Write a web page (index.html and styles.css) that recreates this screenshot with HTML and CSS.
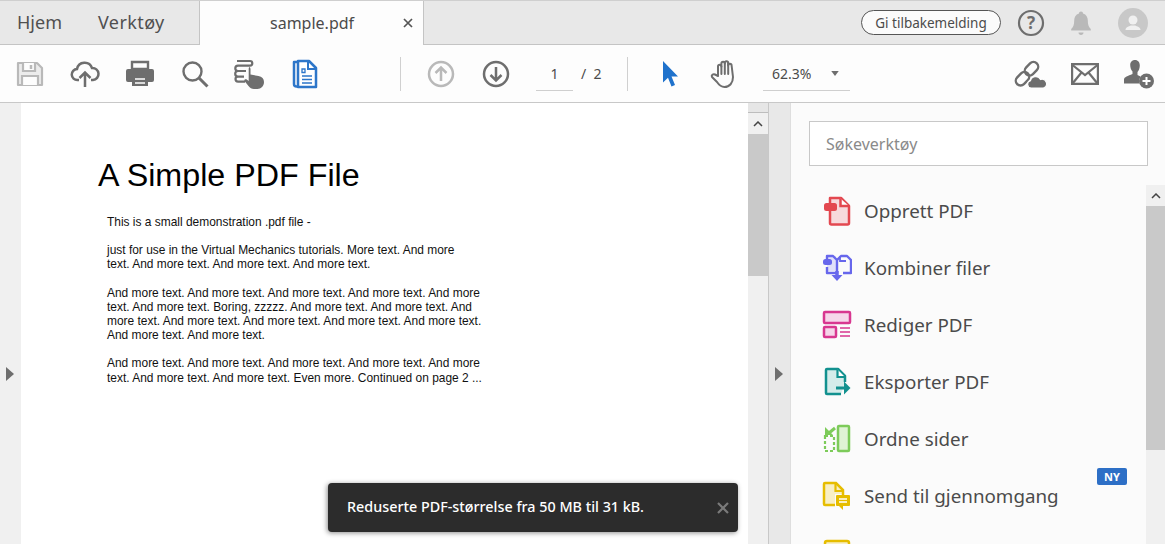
FILE: index.html
```html
<!DOCTYPE html>
<html lang="en">
<head>
    <meta charset="UTF-8">
    <title>sample.pdf</title>
    <link rel="stylesheet" href="styles.css">
</head>
<body>
    <div class="tabbar">
        <a class="nav-tab nav-home">Hjem</a>
        <a class="nav-tab nav-tools">Verktøy</a>
        <div class="doc-tab">
            <span class="doc-name">sample.pdf</span>
            <svg class="doc-close" width="10" height="10" viewBox="0 0 10 10"><path d="M1 1l8 8M9 1l-8 8" stroke="#555" stroke-width="1.7"/></svg>
        </div>
        <div class="tabbar-right">
            <button class="feedback">Gi tilbakemelding</button>
            <svg class="top-icon" width="28" height="28" viewBox="0 0 28 28"><circle cx="14" cy="14" r="12" fill="none" stroke="#6e6e6e" stroke-width="2.2"/><text x="14" y="20" text-anchor="middle" class="help-mark">?</text></svg>
            <svg class="top-icon" width="28" height="28" viewBox="0 0 28 28"><path d="M14 2.500c1.300 0 2 .8 2 1.900 3.400 1 4.800 3.800 4.800 7.100 0 4.500 1 6.800 3 8.500v1.500H4.200V20c2-1.700 3-4 3-8.500 0-3.300 1.400-6.100 4.800-7.100 0-1.100.7-1.900 2-1.900z" fill="#b9b9b9"/><path d="M11.500 23.500h5c0 1.500-1 2.500-2.500 2.500s-2.500-1-2.500-2.500z" fill="#b9b9b9"/></svg>
            <svg class="top-icon" width="30" height="30" viewBox="0 0 30 30"><circle cx="15" cy="15" r="15" fill="#c8c8c8"/><circle cx="15" cy="12" r="4.500" fill="#f0f0f0"/><path d="M7.500 22c0-3 3.500-3.500 5.500-4.500h4c2 1 5.500 1.500 5.500 4.500z" fill="#f0f0f0"/></svg>
        </div>
    </div>

    <div class="toolbar">
        <div class="tool-group">
            <span class="tool">
                <svg width="28" height="28" viewBox="0 0 28 28" fill="#ececec" stroke="#b9b9b9" stroke-width="2.200"><path d="M2 3h19l5 5v17H2z" stroke-linejoin="round"/><path d="M7 3v8h12V3" fill="#fdfdfd"/><path d="M6 25v-9h16v9" fill="#fdfdfd"/><path d="M15 5v4" stroke-width="2.500"/></svg>
            </span>
            <span class="tool">
                <svg width="30" height="30" viewBox="0 0 30 30" fill="none" stroke="#6e6e6e" stroke-width="2.500"><path d="M9 21H7.500a5.500 5.500 0 0 1-.5-11 7.800 7.800 0 0 1 15-1 6 6 0 0 1 1 12H21"/><path d="M15 28V14M9.500 19l5.500-5.500 5.500 5.500"/></svg>
            </span>
            <span class="tool tool-print">
                <svg width="30" height="28" viewBox="0 0 30 28"><path d="M7 2h16v7H7z" fill="none" stroke="#6e6e6e" stroke-width="2.400"/><path d="M3 9h24a2 2 0 0 1 2 2v9a2 2 0 0 1-2 2h-4v-6H7v6H3a2 2 0 0 1-2-2v-9a2 2 0 0 1 2-2z" fill="#6e6e6e"/><path d="M7 15h16v11H7z" fill="#6e6e6e"/><path d="M10 19h10M10 23h10" stroke="#fff" stroke-width="1.600"/></svg>
            </span>
            <span class="tool">
                <svg width="28" height="28" viewBox="0 0 28 28" fill="none" stroke="#6e6e6e"><circle cx="11.500" cy="11.500" r="9" stroke-width="2.400"/><path d="M18 18l8.500 8.500" stroke-width="3"/></svg>
            </span>
            <span class="tool">
                <svg width="32" height="30" viewBox="0 0 32 30"><path d="M3 2h13a2.300 2.300 0 0 1 0 4.600H4a2.700 2.700 0 0 0 0 5.400h8M4 12a2.800 2.800 0 0 0 0 5.600h6M4 17.600a2.500 2.500 0 0 0 0 5h7" fill="none" stroke="#6e6e6e" stroke-width="2.200"/><path d="M14.500 8c1.200 0 2 .8 2 2v5.500l8 1.500c3.500.8 5.500 2.500 5.500 6 0 4-3 7-6.500 7h-3.500c-2.500 0-4-1-5.500-3l-4-5c-.8-1.200 1-2.500 2.200-1.500l2 1.500V10c0-1.200.6-2 1.800-2z" fill="#6e6e6e"/></svg>
            </span>
            <span class="tool">
                <svg width="28" height="30" viewBox="0 0 28 30" fill="none" stroke="#2d76c9" stroke-width="2.500"><path d="M7 3H3v22c0 1.500 1 2.500 2.500 2.500H8" stroke-linejoin="round"/><path d="M7 2h11l7 7v19H7z" fill="#fff" stroke-linejoin="round"/><path d="M17 2v8h8" stroke-width="2"/><path d="M11 17h10M11 20.500h10M11 24h10" stroke-width="1.600"/><path d="M11 10h3v3.500h-3z" stroke-width="1.300"/></svg>
            </span>
        </div>
        <span class="tool-sep"></span>
        <div class="page-nav">
            <span class="tool">
                <svg width="28" height="28" viewBox="0 0 28 28" fill="none" stroke="#b9b9b9" stroke-width="2.500"><circle cx="14" cy="14" r="12"/><path d="M14 21V7.500M8.500 13L14 7.500l5.500 5.500"/></svg>
            </span>
            <span class="tool">
                <svg width="28" height="28" viewBox="0 0 28 28" fill="none" stroke="#6e6e6e" stroke-width="2.500"><circle cx="14" cy="14" r="12"/><path d="M14 7v13.500M8.500 15l5.500 5.500 5.500-5.500"/></svg>
            </span>
            <span class="page-box">1</span>
            <span class="page-total">/&nbsp;&nbsp;2</span>
        </div>
        <span class="tool-sep"></span>
        <span class="tool tool-select">
            <svg width="20" height="28" viewBox="0 0 20 28"><path d="M3 1l15 15.500h-6.500l3.500 8.500-3.500 1.500-3.500-8.800-5 4.800z" fill="#1f72cc"/></svg>
        </span>
        <span class="tool tool-hand">
            <svg width="30" height="30" viewBox="0 0 30 30" fill="none" stroke="#6e6e6e" stroke-width="2" stroke-linecap="round" stroke-linejoin="round"><path d="M9 17V7.500a1.700 1.700 0 0 1 3.400 0V4.500a1.700 1.700 0 0 1 3.400 0V4a1.700 1.700 0 0 1 3.400 0v2.500a1.700 1.700 0 0 1 3.400 0L24 18c0 6-3.500 10-8.500 10-4 0-5.500-2-7.500-5l-5-5c-1-1.500 1-3.500 3-2.500z"/><path d="M12.400 7.500V15M15.800 4.500V15M19.200 4v11"/></svg>
        </span>
        <div class="zoom-box">
            <span>62.3%</span>
            <svg width="8" height="5" viewBox="0 0 9 6"><path d="M0 0h9L4.500 6z" fill="#6e6e6e"/></svg>
        </div>
        <div class="toolbar-right">
            <svg width="34" height="30" viewBox="0 0 34 30" fill="none" stroke="#6e6e6e" stroke-width="2.400"><rect x="2" y="15" width="15" height="9.500" rx="4.750" transform="rotate(-45 9.500 19.750)"/><rect x="11" y="5" width="15" height="9.500" rx="4.750" transform="rotate(-45 18.500 9.750)"/><path d="M18 29a3.700 3.700 0 0 1-.5-7.300 5.500 5.500 0 0 1 10-1.300 4.400 4.400 0 0 1 3 8.600z" fill="#6e6e6e" stroke="#fdfdfd" stroke-width="1.200"/></svg>
            <svg width="28" height="22" viewBox="0 0 28 22" fill="none" stroke="#6e6e6e" stroke-width="2.200"><path d="M1.100 1.100h25.800v19.800H1.100z"/><path d="M1.500 2L14 12 26.500 2M1.500 20.500L10.500 9.500M26.500 20.500L17.500 9.500"/></svg>
            <svg width="32" height="30" viewBox="0 0 32 30"><path d="M12 1c3 0 4.800 2.300 4.800 5.500 0 2.500-.9 5-2.300 6.500v3l3 1.500a8 8 0 0 0-1 7H1v-4c0-2.500 4-3.500 8.500-5.500v-2.500c-1.400-1.500-2.300-4-2.300-6.500C7.200 3.300 9 1 12 1z" fill="#6e6e6e"/><circle cx="23.500" cy="22" r="7.500" fill="#6e6e6e"/><path d="M19.500 22h8M23.500 18v8" stroke="#fff" stroke-width="2"/></svg>
        </div>
    </div>

    <div class="workspace">
        <div class="gutter">
            <span class="arrow-right"></span>
        </div>
        <div class="page">
            <h1 class="page-title">A Simple PDF File</h1>
            <div class="page-text">
                <p>This is a small demonstration .pdf file -</p>
                <p class="para-wide">just for use in the Virtual Mechanics tutorials. More text. And more<br>text. And more text. And more text. And more text.</p>
                <p>And more text. And more text. And more text. And more text. And more<br>text. And more text. Boring, zzzzz. And more text. And more text. And<br>more text. And more text. And more text. And more text. And more text.<br>And more text. And more text.</p>
                <p class="para-last">And more text. And more text. And more text. And more text. And more<br>text. And more text. And more text. Even more. Continued on page 2 ...</p>
            </div>
        </div>
        <div class="scrollbar page-scroll">
            <div class="scroll-cap"></div>
            <div class="scroll-btn"><svg width="10" height="6" viewBox="0 0 10 6"><path d="M1 5l4-4 4 4" fill="none" stroke="#444" stroke-width="1.500"/></svg></div>
            <div class="scroll-thumb page-thumb"></div>
        </div>
        <div class="panel-strip">
            <span class="arrow-right"></span>
        </div>
        <div class="panel">
            <div class="search-wrap">
                <div class="search-box">Søkeverktøy</div>
            </div>
            <div class="panel-body">
                <ul class="tool-list">
                    <li class="tool-row">
                        <svg width="30" height="30" viewBox="0 0 30 30"><path d="M8 2h11l8 8v17a1.500 1.500 0 0 1-1.500 1.500h-16A1.500 1.500 0 0 1 8 27z" fill="#f7d9dc" stroke="#e34850" stroke-width="2.500" stroke-linejoin="round"/><path d="M18.500 2.500V10H27" fill="#fff" stroke="#e34850" stroke-width="2.500"/><rect x="2" y="7" width="13" height="8" rx="2.500" fill="#e34850"/></svg>
                        <span>Opprett PDF</span>
                    </li>
                    <li class="tool-row">
                        <svg width="30" height="30" viewBox="0 0 30 30" fill="none" stroke="#6767ec" stroke-width="2.400"><path d="M5 3h9v15H5z" fill="#e0e0fa" stroke="none"/><path d="M5 8V3h6l4 4v13H5v-6" stroke-linejoin="round"/><path d="M15 7l4-4h6l4 4v13h-8" stroke-linejoin="round"/><path d="M18 3v5h6" stroke-width="1.800"/><rect x="1" y="6" width="9" height="6" rx="2.500" fill="#6767ec" stroke="none"/><path d="M15 18v6" stroke-width="3.500"/><path d="M9.500 22h11L15 28z" fill="#6767ec" stroke="none"/></svg>
                        <span>Kombiner filer</span>
                    </li>
                    <li class="tool-row">
                        <svg width="30" height="30" viewBox="0 0 30 30" stroke="#d83790" stroke-width="2.500"><rect x="2" y="2" width="26" height="11" rx="1" fill="#f6d6ea"/><rect x="2" y="17" width="12" height="10" rx="1" fill="#f6d6ea"/><path d="M18 18h10M18 22h10M18 26h10" stroke-width="1.500"/></svg>
                        <span>Rediger PDF</span>
                    </li>
                    <li class="tool-row">
                        <svg width="30" height="30" viewBox="0 0 30 30"><path d="M19 27H5a1 1 0 0 1-1-1V3a1 1 0 0 1 1-1h11l7 7v6" fill="#d5ecea" stroke="#12918f" stroke-width="2.500" stroke-linejoin="round"/><path d="M15.500 2.500V10H23" fill="#fff" stroke="#12918f" stroke-width="2.200"/><path d="M14 21h9" stroke="#12918f" stroke-width="3"/><path d="M22 14.500l6.500 6.500-6.500 6.500z" fill="#12918f"/></svg>
                        <span>Eksporter PDF</span>
                    </li>
                    <li class="tool-row">
                        <svg width="30" height="30" viewBox="0 0 30 30"><rect x="16" y="2" width="11" height="25" rx="1" fill="#dff3d5" stroke="#7dcb5a" stroke-width="2.500"/><path d="M3 12h9v15H3z" fill="none" stroke="#7dcb5a" stroke-width="2.200" stroke-dasharray="3 2"/><path d="M13 4L7 9" stroke="#7dcb5a" stroke-width="3"/><path d="M3 3v8h8z" fill="#7dcb5a"/></svg>
                        <span>Ordne sider</span>
                    </li>
                    <li class="tool-row">
                        <svg width="30" height="30" viewBox="0 0 30 30"><path d="M2 2h12l7 7v4H13v11H3a1 1 0 0 1-1-1z" fill="#f8efc4"/><path d="M13 24H3a1 1 0 0 1-1-1V3a1 1 0 0 1 1-1h11l7 7v5" fill="none" stroke="#e6bd00" stroke-width="2.500"/><path d="M13.500 2.500V10H21" fill="none" stroke="#e6bd00" stroke-width="2.200"/><path d="M15 14h12a1 1 0 0 1 1 1v9a1 1 0 0 1-1 1h-6v4l-4-4h-2a1 1 0 0 1-1-1v-9a1 1 0 0 1 1-1z" fill="#e6bd00"/><path d="M17 18h8M17 21h8" stroke="#fff" stroke-width="1.400"/></svg>
                        <span>Send til gjennomgang</span>
                        <span class="badge">NY</span>
                    </li>
                    <li class="tool-row">
                        <svg width="30" height="30" viewBox="0 0 30 30"><rect x="3" y="3" width="24" height="24" rx="2" fill="#f8efc4" stroke="#e6bd00" stroke-width="2.500"/></svg>
                    </li>
                </ul>
                <div class="scrollbar panel-scroll">
                    <div class="scroll-btn"><svg width="10" height="6" viewBox="0 0 10 6"><path d="M1 5l4-4 4 4" fill="none" stroke="#444" stroke-width="1.500"/></svg></div>
                    <div class="scroll-thumb panel-thumb"></div>
                </div>
            </div>
        </div>
        <div class="toast">
            <span class="toast-text">Reduserte PDF-størrelse fra 50 MB til 31 kB.</span>
            <svg width="12" height="12" viewBox="0 0 12 12"><path d="M1 1l10 10M11 1L1 11" stroke="#7a7a7a" stroke-width="2.200"/></svg>
        </div>
    </div>
</body>
</html>
```

FILE: styles.css
```css
* {
    box-sizing: border-box;
}

html, body {
    margin: 0;
    height: 544px;
    overflow: hidden;
}

body {
    display: flex;
    flex-direction: column;
    background-color: #fdfdfd;
    color: #4b4b4b;
    font-family: "Noto Sans", "Open Sans", sans-serif;
}

/* top tabs */
.tabbar {
    height: 45px;
    display: flex;
    align-items: stretch;
    background-color: #e8e8e8;
    border-top: 1px solid #cfcfcf;
    border-bottom: 1px solid #c4c4c4;
    flex-shrink: 0;
}

.nav-tab {
    font-size: 18px;
    line-height: 43px;
    color: #505050;
}

.nav-home {
    margin-left: 17px;
    width: 81px;
}

.nav-tools {
    width: 101px;
    letter-spacing: 0.4px;
}

.doc-tab {
    width: 225px;
    height: 44px;
    background-color: #fdfdfd;
    border-left: 1px solid #c4c4c4;
    border-right: 1px solid #c4c4c4;
    display: flex;
    align-items: center;
    padding-left: 70px;
    font-size: 16px;
}

.doc-name {
    width: 133px;
    color: #4b4b4b;
}

.tabbar-right {
    margin-left: auto;
    display: flex;
    align-items: center;
    padding-right: 17px;
}

.feedback {
    width: 140px;
    height: 25px;
    padding: 0;
    border: 1px solid #555;
    border-radius: 13px;
    background-color: #fbfbfb;
    color: #4b4b4b;
    font-family: inherit;
    font-size: 13.5px;
    margin-right: 16px;
}

.top-icon {
    margin-right: 22px;
}

.top-icon:last-child {
    margin-left: 1px;
    margin-right: 0;
}

.help-mark {
    font-size: 17px;
    font-weight: bold;
    fill: #6e6e6e;
}

/* toolbar */
.toolbar {
    height: 58px;
    display: flex;
    align-items: center;
    background-color: #fdfdfd;
    border-bottom: 1px solid #c8c8c8;
    flex-shrink: 0;
}

.tool-group {
    display: flex;
    padding-left: 2px;
    width: 400px;
}

.tool {
    width: 55px;
    height: 34px;
    display: flex;
    align-items: center;
    justify-content: center;
}

.tool-sep {
    width: 1px;
    height: 34px;
    background-color: #d0d0d0;
}

.page-nav {
    display: flex;
    align-items: center;
    padding-left: 12px;
    width: 226px;
}

.page-box {
    width: 37px;
    height: 34px;
    line-height: 34px;
    margin-left: 13px;
    text-align: center;
    border-bottom: 1px solid #cfcfcf;
    font-size: 14px;
}

.page-total {
    margin-left: 8px;
    font-size: 14px;
}

.tool-select {
    margin-left: 14px;
}

.tool-hand {
    margin-left: -1px;
}

.zoom-box {
    width: 87px;
    height: 34px;
    margin-left: 12px;
    padding: 0 11px 0 9px;
    display: flex;
    align-items: center;
    justify-content: space-between;
    border-bottom: 1px solid #cfcfcf;
    font-size: 14px;
}

.toolbar-right {
    margin-left: auto;
    display: flex;
    align-items: center;
    gap: 24px;
    padding-right: 10px;
}

/* document area */
.workspace {
    position: relative;
    flex: 1;
    display: flex;
    min-height: 0;
}

.gutter {
    width: 21px;
    background-color: #f0f0f0;
    padding: 264px 0 0 6px;
}

.arrow-right {
    display: block;
    width: 0;
    height: 0;
    border-left: 8px solid #6e6e6e;
    border-top: 7px solid transparent;
    border-bottom: 7px solid transparent;
}

.page {
    width: 727px;
    background-color: #fff;
    padding: 54px 0 0 77px;
    font-family: "Liberation Sans", Arial, sans-serif;
    color: #000;
}

.page-title {
    margin: 0 0 22px;
    font-size: 32.25px;
    font-weight: normal;
    line-height: 36px;
}

.page-text {
    margin-left: 9px;
    font-size: 11.95px;
    line-height: 14px;
    color: #111;
}

.page-text p {
    margin: 0 0 14px;
}

.page-text .para-wide {
    margin-bottom: 15px;
}

.page-text .para-last {
    line-height: 15px;
}

.scrollbar {
    width: 20px;
    background-color: #f0f0f0;
    flex-shrink: 0;
}

.scroll-cap {
    height: 10px;
    background-color: #e6e6e6;
    border-bottom: 1px solid #bdbdbd;
}

.scroll-btn {
    height: 21px;
    display: flex;
    align-items: center;
    justify-content: center;
}

.scroll-thumb {
    background-color: #c9c9c9;
}

.page-thumb {
    height: 142px;
}

.panel-strip {
    width: 23px;
    background-color: #e8e8e8;
    border-left: 1px solid #c8c8c8;
    border-right: 1px solid #dedede;
    padding: 264px 0 0 6px;
}

.panel {
    flex: 1;
    background-color: #fbfbfb;
    display: flex;
    flex-direction: column;
    min-height: 0;
    overflow: hidden;
}

.search-wrap {
    padding: 18px 17px 0 18px;
}

.search-box {
    height: 45px;
    background-color: #fff;
    border: 1px solid #c8c8c8;
    padding-left: 16px;
    line-height: 45px;
    font-size: 16px;
    color: #8a8a8a;
}

.panel-body {
    flex: 1;
    display: flex;
    margin-top: 19px;
    min-height: 0;
}

.tool-list {
    flex: 1;
    list-style: none;
    margin: -3px 0 0;
    padding: 0 0 0 31px;
}

.tool-row {
    position: relative;
    height: 57px;
    display: flex;
    align-items: center;
    gap: 12px;
    font-size: 18.8px;
    color: #4b4b4b;
    white-space: nowrap;
}

.badge {
    position: absolute;
    top: 1px;
    right: 19px;
    width: 30px;
    height: 17px;
    background-color: #2d6fc6;
    border-radius: 2px;
    color: #fff;
    font-size: 11px;
    font-weight: bold;
    line-height: 17px;
    text-align: center;
}

.panel-scroll {
    width: 19px;
    height: 360px;
}

.panel-thumb {
    height: 244px;
}

.toast {
    position: absolute;
    left: 328px;
    top: 380px;
    width: 410px;
    height: 49px;
    display: flex;
    align-items: center;
    justify-content: space-between;
    padding: 0 9px 0 19px;
    background-color: #2c2c2c;
    border-radius: 4px;
    box-shadow: -1px 1px 5px rgba(0, 0, 0, 0.45);
    color: #fff;
    font-size: 14.35px;
    font-weight: 500;
}

.toast-text {
    padding-bottom: 3px;
}
```
